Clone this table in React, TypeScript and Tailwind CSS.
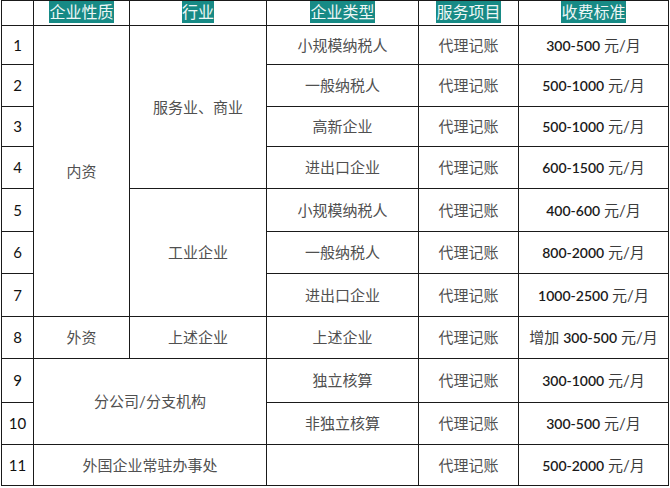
const ROW_H = [39, 42, 40, 42, 43, 42, 43, 42, 44, 42, 41];

type Cell = { text?: string; rowSpan?: number; colSpan?: number; price?: boolean };

const ROWS: Cell[][] = [
  [{ text: "内资", rowSpan: 7 }, { text: "服务业、商业", rowSpan: 4 }, { text: "小规模纳税人" }, { text: "代理记账" }, { text: "300-500 元/月", price: true }],
  [{ text: "一般纳税人" }, { text: "代理记账" }, { text: "500-1000 元/月", price: true }],
  [{ text: "高新企业" }, { text: "代理记账" }, { text: "500-1000 元/月", price: true }],
  [{ text: "进出口企业" }, { text: "代理记账" }, { text: "600-1500 元/月", price: true }],
  [{ text: "工业企业", rowSpan: 3 }, { text: "小规模纳税人" }, { text: "代理记账" }, { text: "400-600 元/月", price: true }],
  [{ text: "一般纳税人" }, { text: "代理记账" }, { text: "800-2000 元/月", price: true }],
  [{ text: "进出口企业" }, { text: "代理记账" }, { text: "1000-2500 元/月", price: true }],
  [{ text: "外资" }, { text: "上述企业" }, { text: "上述企业" }, { text: "代理记账" }, { text: "增加 300-500 元/月", price: true }],
  [{ text: "分公司/分支机构", rowSpan: 2, colSpan: 2 }, { text: "独立核算" }, { text: "代理记账" }, { text: "300-1000 元/月", price: true }],
  [{ text: "非独立核算" }, { text: "代理记账" }, { text: "300-500 元/月", price: true }],
  [{ text: "外国企业常驻办事处", colSpan: 2 }, {}, { text: "代理记账" }, { text: "500-2000 元/月", price: true }],
];

const HEAD = ["企业性质", "行业", "企业类型", "服务项目", "收费标准"];

// digits go semibold, the Chinese bits stay regular like the original sheet
function Price({ text }: { text: string }) {
  const parts = text.split(/([0-9-]+)/).filter(Boolean);
  return (
    <>
      {parts.map((p, k) =>
        /[0-9]/.test(p) ? (
          <span key={k} className="font-semibold text-[#1a1a1a]">{p}</span>
        ) : (
          <span key={k} className="text-[15px] text-[#3c3c3c]">{p}</span>
        )
      )}
    </>
  );
}

export default function App() {
  return (
    <div className="h-[488px] w-[670px] bg-white pl-px" style={{ fontFamily: "Lato, 'Noto Sans CJK SC', sans-serif" }}>
      <table className="table-fixed border-collapse border border-[#1a1a1a] text-[15px]">
        <colgroup>
          <col className="w-[32px]" />
          <col className="w-[96px]" />
          <col className="w-[137px]" />
          <col className="w-[152px]" />
          <col className="w-[100px]" />
          <col className="w-[150px]" />
        </colgroup>
        <thead>
          <tr className="h-[25px]">
            <th className="border border-[#1a1a1a] p-0" />
            {HEAD.map((h) => (
              <th key={h} className="border border-[#1a1a1a] p-0 text-center align-top font-normal">
                <span className="inline-block bg-[#178a85] text-[16px] leading-[22px] text-[#eef7f6]">{h}</span>
              </th>
            ))}
          </tr>
        </thead>
        <tbody>
          {ROWS.map((cells, i) => (
            <tr key={i} style={{ height: ROW_H[i] }}>
              <td className="border border-[#1a1a1a] p-0 text-center text-[15px] text-[#111]">{i + 1}</td>
              {cells.map((c, j) => (
                <td
                  key={j}
                  rowSpan={c.rowSpan}
                  colSpan={c.colSpan}
                  className={`border border-[#1a1a1a] p-0 text-center whitespace-nowrap ${
                    c.price ? "text-[14px]" : "text-[#505050]"
                  }`}
                >
                  {c.price && c.text ? <Price text={c.text} /> : c.text}
                </td>
              ))}
            </tr>
          ))}
        </tbody>
      </table>
    </div>
  );
}
